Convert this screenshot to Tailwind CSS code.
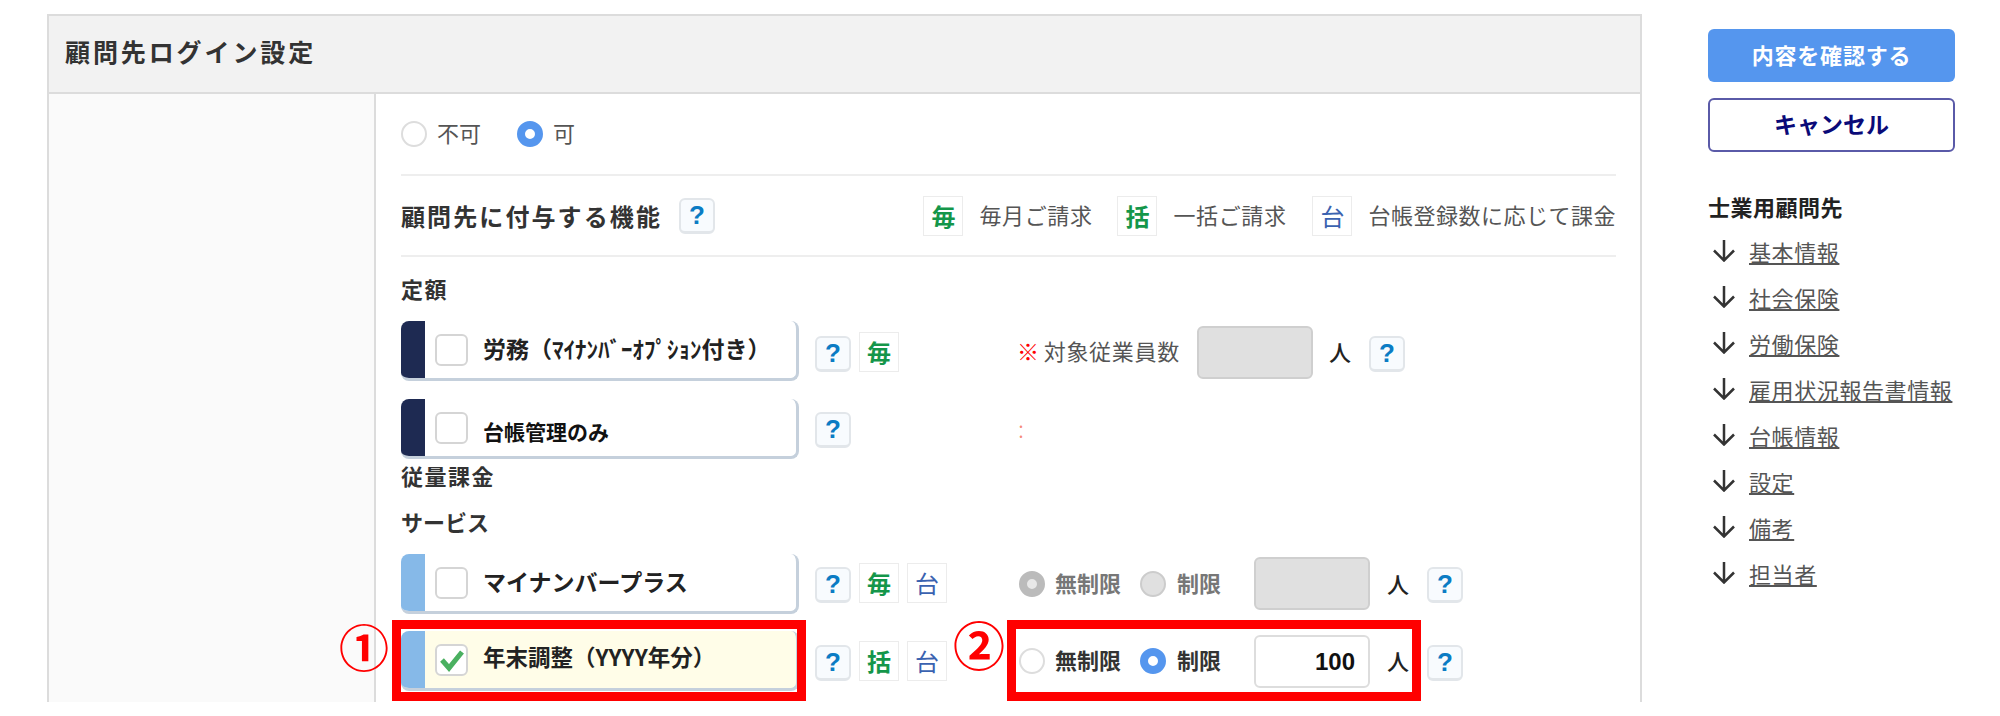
<!DOCTYPE html>
<html lang="ja">
  <head>
    <meta charset="UTF-8" />
    <title>顧問先ログイン設定</title>
    <script src="https://cdn.jsdelivr.net/npm/@tailwindcss/browser@4"></script>
  </head>
  <body class="bg-white h-[716px] overflow-hidden font-['Noto_Sans_CJK_JP',sans-serif] text-[#333]">
    <div class="flex items-start pl-[47px] pt-[14px]">
      <!-- main card -->
      <div class="w-[1595px] h-[688px] border-x-2 border-t-2 border-[#dcdcdc] flex flex-col">
        <div class="h-[78px] shrink-0 bg-[#f2f2f2] border-b-2 border-[#dcdcdc] flex items-center pl-[16px] pb-[4px] text-[25px] font-bold tracking-[2.9px]">顧問先ログイン設定</div>
        <div class="flex flex-1">
          <div class="w-[327px] bg-[#fafafa] border-r-2 border-[#dcdcdc]"></div>
          <div class="flex-1 pl-[25px] pr-[24px]">
            <div class="h-[82px] border-b-2 border-[#eeeeee] flex items-center text-[22px] text-[#555]">
              <span class="w-[26px] h-[26px] rounded-full border-2 border-[#dddddd]"></span>
              <span class="ml-[10px] w-[80px] pb-[4px]">不可</span>
              <span class="w-[26px] h-[26px] rounded-full border-[8px] border-[#5596ee] bg-white"></span>
              <span class="ml-[10px] pb-[4px]">可</span>
            </div>

            <div class="h-[81px] border-b-2 border-[#eeeeee] flex items-center">
              <span class="text-[24px] font-bold tracking-[2.1px]">顧問先に付与する機能</span>
              <span class="ml-[17px] flex w-[36px] h-[36px] items-center justify-center rounded-md border-2 border-b-[3px] border-[#e2e6ea] bg-[#f8fbfe] text-[26px] font-bold text-[#0b7cc4] font-['Liberation_Sans',sans-serif]">?</span>
              <span class="ml-auto flex items-center text-[22px] text-[#555]">
                <span class="flex w-[40px] h-[40px] items-center justify-center border border-[#ececec] text-[24px] font-bold text-[#14964a]">毎</span>
                <span class="ml-[16px] w-[138px] tracking-[0.6px] pb-[3px]">毎月ご請求</span>
                <span class="flex w-[40px] h-[40px] items-center justify-center border border-[#ececec] text-[24px] font-bold text-[#14964a]">括</span>
                <span class="ml-[16px] w-[139px] tracking-[0.6px] pb-[3px]">一括ご請求</span>
                <span class="flex w-[40px] h-[40px] items-center justify-center border border-[#ececec] text-[24px] text-[#3a62b0]">台</span>
                <span class="ml-[16px] tracking-[0.5px] pb-[3px]">台帳登録数に応じて課金</span>
              </span>
            </div>

            <div class="mt-[15px] h-[32px] leading-[32px] text-[22px] font-bold tracking-[1.5px]">定額</div>

            <!-- row 1 -->
            <div class="mt-[17px] h-[60px] flex items-start">
              <div class="w-[398px] h-[60px] flex rounded-l-lg rounded-r-lg bg-white border-b-[3px] border-r-[3px] border-[#c5d0dc] overflow-hidden">
                <span class="w-[24px] bg-[#1e2a52]"></span>
                <span class="ml-[10px] mt-[13px] w-[33px] h-[32px] rounded-md border-2 border-[#d5d5d5] bg-white"></span>
                <span class="ml-[15px] mt-[11px] text-[23px] leading-[32px] font-bold text-[#222] whitespace-nowrap">労務（ﾏｲﾅﾝﾊﾞｰｵﾌﾟｼｮﾝ付き）</span>
              </div>
              <span class="ml-[16px] mt-[15px] flex w-[36px] h-[36px] items-center justify-center rounded-md border-2 border-b-[3px] border-[#e2e6ea] bg-[#f8fbfe] text-[26px] font-bold text-[#0b7cc4] font-['Liberation_Sans',sans-serif]">?</span>
              <span class="ml-[8px] mt-[11px] flex w-[40px] h-[40px] items-center justify-center border border-[#ececec] text-[24px] font-bold text-[#14964a]">毎</span>
              <span class="ml-[118px] mt-[13px] text-[22px] text-[#555] whitespace-nowrap tracking-[0.7px]"><span class="text-[#f00] font-bold mr-[4px]">※</span>対象従業員数</span>
              <span class="ml-[17px] mt-[5px] w-[116px] h-[53px] rounded-md border-2 border-[#cfcfcf] bg-[#e0e0e0]"></span>
              <span class="ml-[16px] mt-[14px] text-[22px] font-medium text-[#222]">人</span>
              <span class="ml-[18px] mt-[15px] flex w-[36px] h-[36px] items-center justify-center rounded-md border-2 border-b-[3px] border-[#e2e6ea] bg-[#f8fbfe] text-[26px] font-bold text-[#0b7cc4] font-['Liberation_Sans',sans-serif]">?</span>
            </div>

            <!-- row 2 -->
            <div class="mt-[18px] h-[60px] flex items-start">
              <div class="w-[398px] h-[60px] flex rounded-l-lg rounded-r-lg bg-white border-b-[3px] border-r-[3px] border-[#c5d0dc] overflow-hidden">
                <span class="w-[24px] bg-[#1e2a52]"></span>
                <span class="ml-[10px] mt-[13px] w-[33px] h-[32px] rounded-md border-2 border-[#d5d5d5] bg-white"></span>
                <span class="ml-[15px] mt-[17px] text-[21px] leading-[30px] font-bold text-[#111] whitespace-nowrap">台帳管理のみ</span>
              </div>
              <span class="ml-[16px] mt-[13px] flex w-[36px] h-[36px] items-center justify-center rounded-md border-2 border-b-[3px] border-[#e2e6ea] bg-[#f8fbfe] text-[26px] font-bold text-[#0b7cc4] font-['Liberation_Sans',sans-serif]">?</span>
              <span class="ml-[167px] mt-[13px] text-[24px] leading-[32px] font-light text-[#f04020]/60">:</span>
            </div>

            <div class="h-[32px] leading-[32px] text-[22px] font-bold tracking-[1.5px]">従量課金</div>
            <div class="mt-[14px] h-[32px] leading-[32px] text-[22px] font-bold">サービス</div>

            <!-- row 3 -->
            <div class="mt-[17px] h-[60px] flex items-start">
              <div class="w-[398px] h-[60px] flex rounded-l-lg rounded-r-lg bg-white border-b-[3px] border-r-[3px] border-[#c5d0dc] overflow-hidden">
                <span class="w-[24px] bg-[#86b9e8]"></span>
                <span class="ml-[10px] mt-[13px] w-[33px] h-[32px] rounded-md border-2 border-[#d5d5d5] bg-white"></span>
                <span class="ml-[15px] mt-[11px] text-[23px] leading-[32px] font-bold text-[#222] whitespace-nowrap">マイナンバープラス</span>
              </div>
              <span class="ml-[16px] mt-[13px] flex w-[36px] h-[36px] items-center justify-center rounded-md border-2 border-b-[3px] border-[#e2e6ea] bg-[#f8fbfe] text-[26px] font-bold text-[#0b7cc4] font-['Liberation_Sans',sans-serif]">?</span>
              <span class="ml-[8px] mt-[9px] flex w-[40px] h-[40px] items-center justify-center border border-[#ececec] text-[24px] font-bold text-[#14964a]">毎</span>
              <span class="ml-[8px] mt-[9px] flex w-[40px] h-[40px] items-center justify-center border border-[#ececec] text-[24px] text-[#3a62b0]">台</span>
              <span class="ml-[72px] mt-[17px] w-[26px] h-[26px] rounded-full border-[8px] border-[#bbbbbb] bg-[#e8e8e8]"></span>
              <span class="ml-[10px] mt-[12px] w-[85px] text-[22px] leading-[32px] font-bold text-[#777]">無制限</span>
              <span class="mt-[17px] w-[26px] h-[26px] rounded-full border-2 border-[#cccccc] bg-[#e0e0e0]"></span>
              <span class="ml-[11px] mt-[12px] w-[77px] text-[22px] leading-[32px] font-bold text-[#777]">制限</span>
              <span class="mt-[3px] w-[116px] h-[53px] rounded-md border-2 border-[#cfcfcf] bg-[#e0e0e0]"></span>
              <span class="ml-[17px] mt-[13px] text-[22px] leading-[32px] font-medium text-[#222]">人</span>
              <span class="ml-[18px] mt-[13px] flex w-[36px] h-[36px] items-center justify-center rounded-md border-2 border-b-[3px] border-[#e2e6ea] bg-[#f8fbfe] text-[26px] font-bold text-[#0b7cc4] font-['Liberation_Sans',sans-serif]">?</span>
            </div>

            <!-- row 4 -->
            <div class="relative mt-[17px] h-[60px] flex items-start">
              <div class="w-[398px] h-[60px] flex rounded-l-lg rounded-r-lg bg-[#fffde8] border-b-[3px] border-r-[3px] border-[#c5d0dc] overflow-hidden">
                <span class="w-[24px] bg-[#86b9e8]"></span>
                <span class="ml-[10px] mt-[13px] flex items-center justify-center w-[33px] h-[32px] rounded-md border-2 border-[#d5d5d5] bg-white">
                  <svg width="26" height="24" viewBox="0 0 26 24"><path d="M3 12l7 8L23 4" fill="none" stroke="#4ab060" stroke-width="5" /></svg>
                </span>
                <span class="ml-[15px] mt-[10px] text-[22.5px] leading-[30px] font-bold text-[#222] whitespace-nowrap">年末調整（YYYY年分）</span>
              </div>
              <span class="ml-[16px] mt-[14px] flex w-[36px] h-[36px] items-center justify-center rounded-md border-2 border-b-[3px] border-[#e2e6ea] bg-[#f8fbfe] text-[26px] font-bold text-[#0b7cc4] font-['Liberation_Sans',sans-serif]">?</span>
              <span class="ml-[8px] mt-[10px] flex w-[40px] h-[40px] items-center justify-center border border-[#ececec] text-[24px] font-bold text-[#14964a]">括</span>
              <span class="ml-[8px] mt-[10px] flex w-[40px] h-[40px] items-center justify-center border border-[#ececec] text-[24px] text-[#3a62b0]">台</span>
              <span class="ml-[72px] mt-[17px] w-[26px] h-[26px] rounded-full border-2 border-[#dddddd]"></span>
              <span class="ml-[10px] mt-[12px] w-[85px] text-[22px] leading-[32px] font-bold text-[#333]">無制限</span>
              <span class="mt-[17px] w-[26px] h-[26px] rounded-full border-[8px] border-[#5596ee] bg-white"></span>
              <span class="ml-[11px] mt-[12px] w-[77px] text-[22px] leading-[32px] font-bold text-[#333]">制限</span>
              <span class="mt-[4px] w-[116px] h-[53px] rounded-md border-2 border-[#dddddd] bg-white pr-[13px] text-right text-[24px] leading-[49px] font-bold text-[#111] font-['Liberation_Sans',sans-serif]">100</span>
              <span class="ml-[17px] mt-[13px] text-[22px] leading-[32px] font-medium text-[#222]">人</span>
              <span class="ml-[18px] mt-[14px] flex w-[36px] h-[36px] items-center justify-center rounded-md border-2 border-b-[3px] border-[#e2e6ea] bg-[#f8fbfe] text-[26px] font-bold text-[#0b7cc4] font-['Liberation_Sans',sans-serif]">?</span>

              <!-- red callouts -->
              <div class="absolute left-[-9px] top-[-11px] w-[414px] h-[81px] border-[9px] border-[#ff0000]"></div>
              <div class="absolute left-[606px] top-[-11px] w-[414px] h-[81px] border-[9px] border-[#ff0000]"></div>
              <span class="absolute left-[-62px] top-[-16px] text-[50px] leading-[60px] font-bold text-[#ff0000]">①</span>
              <span class="absolute left-[552px] top-[-17px] text-[52px] leading-[60px] font-bold text-[#ff0000]">②</span>
            </div>
          </div>
        </div>
      </div>

      <!-- side nav -->
      <div class="ml-[66px] mt-[15px] w-[247px]">
        <div class="flex h-[53px] items-center justify-center rounded-md bg-[#5596ee] pb-[2px] text-[22px] font-bold text-white tracking-[0.8px]">内容を確認する</div>
        <div class="mt-[16px] flex h-[54px] items-center justify-center rounded-md border-2 border-[#5a5aa8] bg-white pb-[3px] text-[23px] font-bold text-[#0a0a78]">キャンセル</div>
        <div class="mt-[38px] h-[32px] leading-[32px] text-[22px] font-bold text-[#222] tracking-[0.5px]">士業用顧問先</div>
        <ul class="mt-[6px] text-[22px] text-[#555] tracking-[0.6px]">
          <li class="flex h-[46px] items-center"><svg class="ml-[5px] mr-[14px]" width="22" height="22" viewBox="0 0 22 22"><path d="M11 0v20M1 10.500l10 10 10-10" fill="none" stroke="#333" stroke-width="2.500" /></svg><span class="underline">基本情報</span></li>
          <li class="flex h-[46px] items-center"><svg class="ml-[5px] mr-[14px]" width="22" height="22" viewBox="0 0 22 22"><path d="M11 0v20M1 10.500l10 10 10-10" fill="none" stroke="#333" stroke-width="2.500" /></svg><span class="underline">社会保険</span></li>
          <li class="flex h-[46px] items-center"><svg class="ml-[5px] mr-[14px]" width="22" height="22" viewBox="0 0 22 22"><path d="M11 0v20M1 10.500l10 10 10-10" fill="none" stroke="#333" stroke-width="2.500" /></svg><span class="underline">労働保険</span></li>
          <li class="flex h-[46px] items-center"><svg class="ml-[5px] mr-[14px]" width="22" height="22" viewBox="0 0 22 22"><path d="M11 0v20M1 10.500l10 10 10-10" fill="none" stroke="#333" stroke-width="2.500" /></svg><span class="underline whitespace-nowrap">雇用状況報告書情報</span></li>
          <li class="flex h-[46px] items-center"><svg class="ml-[5px] mr-[14px]" width="22" height="22" viewBox="0 0 22 22"><path d="M11 0v20M1 10.500l10 10 10-10" fill="none" stroke="#333" stroke-width="2.500" /></svg><span class="underline">台帳情報</span></li>
          <li class="flex h-[46px] items-center"><svg class="ml-[5px] mr-[14px]" width="22" height="22" viewBox="0 0 22 22"><path d="M11 0v20M1 10.500l10 10 10-10" fill="none" stroke="#333" stroke-width="2.500" /></svg><span class="underline">設定</span></li>
          <li class="flex h-[46px] items-center"><svg class="ml-[5px] mr-[14px]" width="22" height="22" viewBox="0 0 22 22"><path d="M11 0v20M1 10.500l10 10 10-10" fill="none" stroke="#333" stroke-width="2.500" /></svg><span class="underline">備考</span></li>
          <li class="flex h-[46px] items-center"><svg class="ml-[5px] mr-[14px]" width="22" height="22" viewBox="0 0 22 22"><path d="M11 0v20M1 10.500l10 10 10-10" fill="none" stroke="#333" stroke-width="2.500" /></svg><span class="underline">担当者</span></li>
        </ul>
      </div>
    </div>
  </body>
</html>
